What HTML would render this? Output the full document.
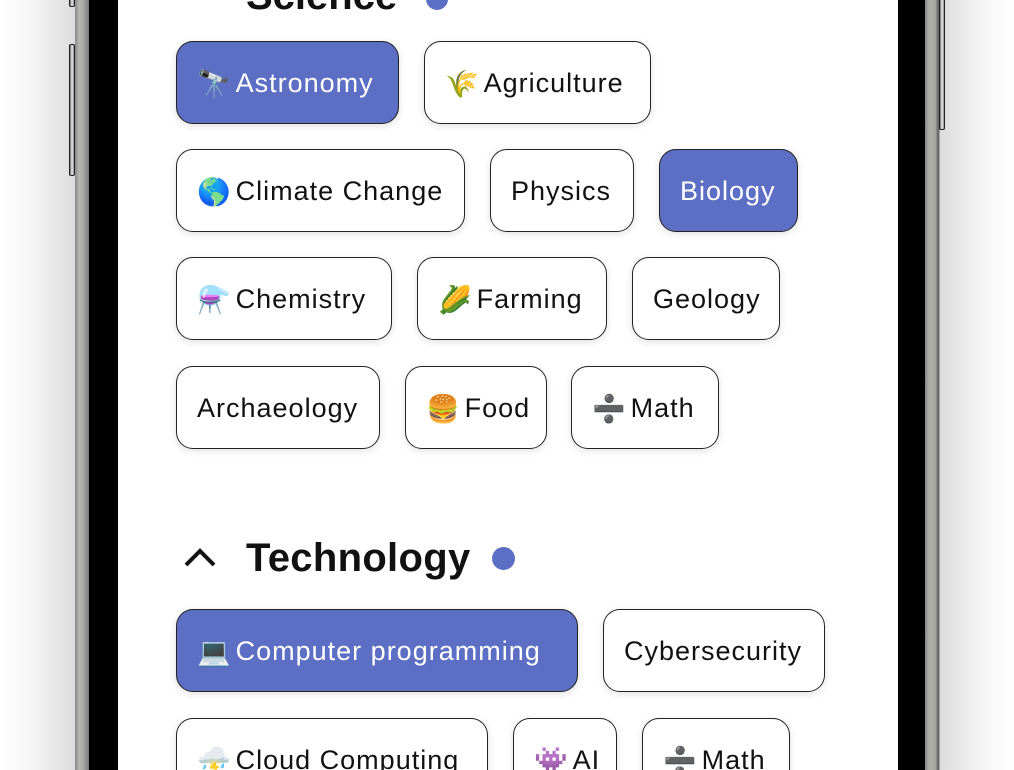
<!DOCTYPE html>
<html><head><meta charset="utf-8"><style>
html,body{margin:0;width:1014px;height:770px;overflow:hidden}
body{background:#fff;position:relative;font-family:"Liberation Sans","Noto Sans CJK JP",sans-serif}
.shl{position:absolute;left:0;top:0;width:75px;height:770px;background:linear-gradient(to right,#fff 0%,#f6f6f6 40%,#dcdcdc 100%)}
.shr{position:absolute;left:940px;top:0;width:74px;height:770px;background:linear-gradient(to left,#fff 0%,#f6f6f6 40%,#dcdcdc 100%)}
.fl{position:absolute;left:75px;top:0;width:14px;height:770px;background:linear-gradient(to right,#888,#b8b8b2 30%,#a8a8a2 60%,#777 100%)}
.fr{position:absolute;left:925px;top:0;width:15px;height:770px;background:linear-gradient(to right,#888,#b0b0aa 30%,#a8a8a2 70%,#555 90%,#ccc 100%)}
.bl{position:absolute;left:89px;top:0;width:29px;height:770px;background:#000}
.br{position:absolute;left:898px;top:0;width:27px;height:770px;background:#000}
.btn{position:absolute;width:4px;border:1px solid #222;background:linear-gradient(to right,#666,#eee,#888);border-radius:2px}
.c{position:absolute;border:1.5px solid #222;border-radius:17px;background:#fff;box-sizing:border-box;height:83px;display:flex;align-items:center;padding-left:20px;padding-top:2px;font-size:27px;color:#111;letter-spacing:1px;box-shadow:0 2px 8px rgba(0,0,0,.12);white-space:nowrap}
.c.on{background:#5c6fc4;color:#fff}
.e{font-size:27px;margin-right:5px;letter-spacing:0}
</style></head><body>
<div class="shl"></div><div class="shr"></div>
<div class="fl"></div><div class="fr"></div>
<div class="bl"></div><div class="br"></div>
<div class="btn" style="left:69px;top:-5px;height:10px"></div>
<div class="btn" style="left:69px;top:44px;height:130px"></div>
<div class="btn" style="left:939px;top:-5px;height:133px"></div>
<div style="position:absolute;left:246px;top:-26px;font-size:40px;font-weight:bold;color:#111">Science</div>
<div style="position:absolute;left:426px;top:-12px;width:22px;height:22px;border-radius:50%;background:#5c6fc4"></div>

<div class="c on" style="left:176px;top:41px;width:223px"><span class="e">🔭</span>Astronomy</div>
<div class="c" style="left:424px;top:41px;width:227px"><span class="e">🌾</span>Agriculture</div>

<div class="c" style="left:176px;top:149px;width:289px"><span class="e">🌎</span>Climate Change</div>
<div class="c" style="left:490px;top:149px;width:144px">Physics</div>
<div class="c on" style="left:659px;top:149px;width:139px">Biology</div>

<div class="c" style="left:176px;top:257px;width:216px"><span class="e">⚗️</span>Chemistry</div>
<div class="c" style="left:417px;top:257px;width:190px"><span class="e">🌽</span>Farming</div>
<div class="c" style="left:632px;top:257px;width:148px">Geology</div>

<div class="c" style="left:176px;top:366px;width:204px">Archaeology</div>
<div class="c" style="left:405px;top:366px;width:142px"><span class="e">🍔</span>Food</div>
<div class="c" style="left:571px;top:366px;width:148px"><span class="e">➗</span>Math</div>

<svg style="position:absolute;left:183px;top:545px" width="34" height="24" viewBox="0 0 34 24"><path d="M3 20 L17 6 L31 20" fill="none" stroke="#111" stroke-width="4"/></svg>
<div style="position:absolute;left:246px;top:536px;font-size:40px;font-weight:bold;color:#111;letter-spacing:0.3px">Technology</div>
<div style="position:absolute;left:492px;top:547px;width:23px;height:23px;border-radius:50%;background:#5c6fc4"></div>

<div class="c on" style="left:176px;top:609px;width:402px"><span class="e">💻</span>Computer programming</div>
<div class="c" style="left:603px;top:609px;width:222px">Cybersecurity</div>

<div class="c" style="left:176px;top:718px;width:312px"><span class="e">⛈️</span>Cloud Computing</div>
<div class="c" style="left:513px;top:718px;width:104px"><span class="e">👾</span>AI</div>
<div class="c" style="left:642px;top:718px;width:148px"><span class="e">➗</span>Math</div>
</body></html>
